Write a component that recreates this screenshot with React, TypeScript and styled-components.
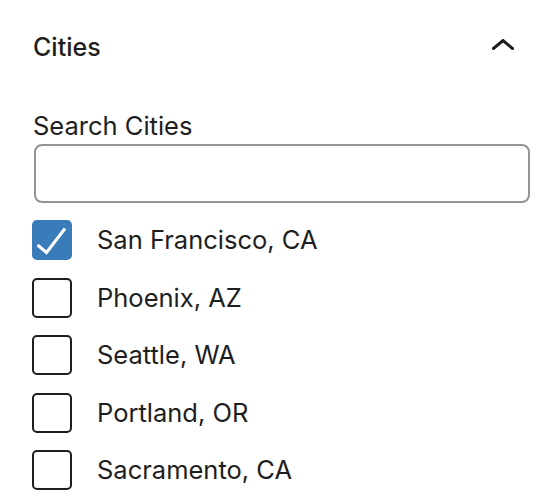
import React, { useState } from 'react'
import styled, { createGlobalStyle } from 'styled-components'

const GlobalStyle = createGlobalStyle`
  body {
    margin: 0;
    background: #ffffff;
    font-family: Inter, 'Noto Sans', sans-serif;
    color: #1e1e1e;
  }
`

const cities = ['San Francisco, CA', 'Phoenix, AZ', 'Seattle, WA', 'Portland, OR', 'Sacramento, CA']

export default function App() {
  const [checked, setChecked] = useState<string[]>(['San Francisco, CA'])
  const [query, setQuery] = useState('')

  const toggle = (city: string) =>
    setChecked((prev) => (prev.includes(city) ? prev.filter((c) => c !== city) : [...prev, city]))

  return (
    <Panel>
      <GlobalStyle />
      <Header>
        <Title>Cities</Title>
        <Chevron viewBox="0 0 22 11" aria-hidden>
          <path d="M1.5 9.5 L11 1.5 L20.5 9.5" />
        </Chevron>
      </Header>

      <Field>
        <Label htmlFor="search-cities">Search Cities</Label>
        <Input id="search-cities" value={query} onChange={(e) => setQuery(e.target.value)} />
      </Field>

      <List>
        {cities
          .filter((c) => c.toLowerCase().includes(query.toLowerCase()))
          .map((city) => {
            const isOn = checked.includes(city)
            return (
              <Row key={city} onClick={() => toggle(city)}>
                <Box $checked={isOn}>
                  {isOn && (
                    <Tick viewBox="0 0 40 40" aria-hidden>
                      <path d="M5.5 25 L14.5 32.5 L33 8.5" />
                    </Tick>
                  )}
                </Box>
                <RowLabel>{city}</RowLabel>
              </Row>
            )
          })}
      </List>
    </Panel>
  )
}

const Panel = styled.div`
  width: 548px;
  height: 504px;
  box-sizing: border-box;
  padding: 0 18px 0 32px;
  overflow: hidden;
`

const Header = styled.div`
  display: flex;
  align-items: center;
  justify-content: space-between;
  height: 94px;
`

const Title = styled.h2`
  margin: 0;
  font-size: 25px;
  font-weight: 500;
  line-height: 1;
  padding-left: 1px;
`

const Chevron = styled.svg`
  width: 22px;
  height: 11px;
  margin: 0 16px 6px 0;
  fill: none;
  stroke: #1e1e1e;
  stroke-width: 3;
  stroke-linecap: square;
`

const Field = styled.div`
  display: flex;
  flex-direction: column;
  gap: 3px;
  padding-top: 17px;
`

const Label = styled.label`
  font-size: 25.5px;
  line-height: 30px;
  padding-left: 1px;
`

const Input = styled.input`
  box-sizing: border-box;
  width: 496px;
  height: 59px;
  margin-left: 2px;
  border: 2px solid #939396;
  border-radius: 8px;
  font: inherit;
  font-size: 24px;
  padding: 0 14px;
  outline: none;
`

const List = styled.div`
  display: flex;
  flex-direction: column;
  gap: 17.5px;
  padding-top: 17px;
`

const Row = styled.div`
  display: flex;
  align-items: center;
  gap: 25px;
  cursor: pointer;
`

const Box = styled.span<{ $checked: boolean }>`
  box-sizing: border-box;
  width: 40px;
  height: 40px;
  flex: none;
  border-radius: 5px;
  border: 2px solid ${(p) => (p.$checked ? '#3a7bb9' : '#1e1e1e')};
  background: ${(p) => (p.$checked ? '#3a7bb9' : '#ffffff')};
  display: flex;
  align-items: center;
  justify-content: center;
`

const Tick = styled.svg`
  width: 40px;
  height: 40px;
  flex: none;
  fill: none;
  stroke: #ffffff;
  stroke-width: 3;
`

const RowLabel = styled.span`
  font-size: 25.5px;
  line-height: 30px;
`
